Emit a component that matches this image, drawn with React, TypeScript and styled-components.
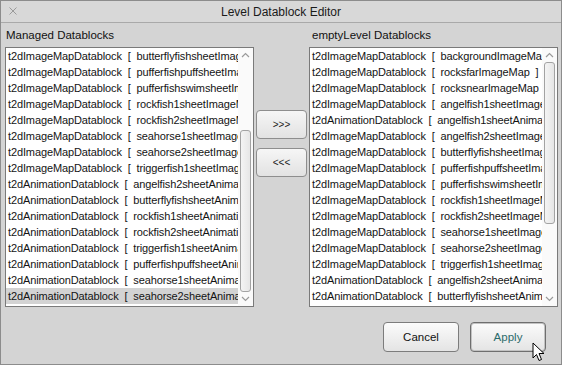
import React from "react";
import styled, { createGlobalStyle } from "styled-components";

const Global = createGlobalStyle`
  html, body { margin: 0; padding: 0; background: #d4d4d4; }
  body { font-family: "Liberation Sans", Arial, sans-serif; }
`;

const Window = styled.div`
  position: relative;
  width: 562px;
  height: 365px;
  box-sizing: border-box;
  border: 1px solid #8c8c8c;
  background: #d4d4d4;
  display: flex;
  flex-direction: column;
  overflow: hidden;
`;

const TitleBar = styled.div`
  position: relative;
  height: 21px;
  flex: none;
  display: flex;
  align-items: center;
  justify-content: center;
  background: #d8d8d8;
  border-bottom: 1px solid #a9a9a9;
  font-size: 12px;
  color: #1a1a1a;
`;

const CloseIcon = styled.svg`
  position: absolute;
  left: 8px;
  top: 6px;
`;

const Body = styled.div`
  display: grid;
  grid-template-columns: 249px 51px 249px;
  column-gap: 2px;
  grid-template-rows: 24px 260px;
  padding: 0 3px 0 4px;
`;

const Label = styled.div<{ $indent: number }>`
  display: flex;
  align-items: center;
  padding-left: ${(p) => p.$indent}px;
  font-size: 11.5px;
  color: #111;
`;

const ListBox = styled.div`
  box-sizing: border-box;
  height: 260px;
  border: 1px solid #7a7a7a;
  background: #ffffff;
  display: flex;
`;

const Rows = styled.div`
  flex: 1;
  min-width: 0;
  display: flex;
  flex-direction: column;
  overflow: hidden;
`;

const Row = styled.div<{ $selected?: boolean }>`
  height: 16px;
  line-height: 16px;
  padding-left: 2px;
  font-size: 11px;
  letter-spacing: -0.12px;
  color: #141414;
  white-space: pre;
  overflow: hidden;
  background: ${(p) => (p.$selected ? "#d3d3d3" : "transparent")};
`;

const ScrollBar = styled.div`
  width: 15px;
  flex: none;
  display: flex;
  flex-direction: column;
  align-items: center;
  background: #fafafa;
`;

const Arrow = styled.div`
  height: 14px;
  flex: none;
  display: flex;
  align-items: center;
  justify-content: center;
`;

const Track = styled.div<{ $atEnd: boolean }>`
  flex: 1;
  width: 100%;
  display: flex;
  flex-direction: column;
  align-items: center;
  justify-content: ${(p) => (p.$atEnd ? "flex-end" : "flex-start")};
`;

const Thumb = styled.div`
  box-sizing: border-box;
  width: 11px;
  height: 162px;
  border: 1px solid #a3a3a3;
  border-radius: 3px;
  background: linear-gradient(to right, #f4f4f4, #e6e6e6);
`;

const Middle = styled.div`
  display: flex;
  flex-direction: column;
  gap: 9px;
  padding-top: 63px;
`;

const MoveButton = styled.button`
  box-sizing: border-box;
  width: 51px;
  height: 29px;
  border: 1px solid #8e8e8e;
  border-radius: 4px;
  background: linear-gradient(#f6f6f6, #e2e2e2);
  font-family: "Liberation Sans", Arial, sans-serif;
  font-size: 10px;
  color: #222;
  padding: 0;
`;

const Footer = styled.div`
  display: flex;
  justify-content: flex-end;
  gap: 11px;
  padding: 15px 15px 0 0;
`;

const DialogButton = styled.button<{ $default?: boolean }>`
  box-sizing: border-box;
  width: 76px;
  height: 30px;
  border: 1px solid ${(p) => (p.$default ? "#6e6e6e" : "#7c7c7c")};
  box-shadow: ${(p) => (p.$default ? "inset 0 0 0 1px #c2c2c2" : "none")};
  border-radius: 4px;
  background: linear-gradient(#fbfbfb, #e4e4e4);
  font-family: "Liberation Sans", Arial, sans-serif;
  font-size: 11.5px;
  color: ${(p) => (p.$default ? "#2b6b6b" : "#111")};
  padding: 0;
`;

const Cursor = styled.svg`
  position: absolute;
  left: 531px;
  top: 341px;
`;

const left = [
  ["t2dImageMapDatablock", "butterflyfishsheetImageMap"],
  ["t2dImageMapDatablock", "pufferfishpuffsheetImageMap"],
  ["t2dImageMapDatablock", "pufferfishswimsheetImageMap"],
  ["t2dImageMapDatablock", "rockfish1sheetImageMap"],
  ["t2dImageMapDatablock", "rockfish2sheetImageMap"],
  ["t2dImageMapDatablock", "seahorse1sheetImageMap"],
  ["t2dImageMapDatablock", "seahorse2sheetImageMap"],
  ["t2dImageMapDatablock", "triggerfish1sheetImageMap"],
  ["t2dAnimationDatablock", "angelfish2sheetAnimation"],
  ["t2dAnimationDatablock", "butterflyfishsheetAnimation"],
  ["t2dAnimationDatablock", "rockfish1sheetAnimation"],
  ["t2dAnimationDatablock", "rockfish2sheetAnimation"],
  ["t2dAnimationDatablock", "triggerfish1sheetAnimation"],
  ["t2dAnimationDatablock", "pufferfishpuffsheetAnimation"],
  ["t2dAnimationDatablock", "seahorse1sheetAnimation"],
  ["t2dAnimationDatablock", "seahorse2sheetAnimation"],
];

const right = [
  ["t2dImageMapDatablock", "backgroundImageMap"],
  ["t2dImageMapDatablock", "rocksfarImageMap"],
  ["t2dImageMapDatablock", "rocksnearImageMap"],
  ["t2dImageMapDatablock", "angelfish1sheetImageMap"],
  ["t2dAnimationDatablock", "angelfish1sheetAnimation"],
  ["t2dImageMapDatablock", "angelfish2sheetImageMap"],
  ["t2dImageMapDatablock", "butterflyfishsheetImageMap"],
  ["t2dImageMapDatablock", "pufferfishpuffsheetImageMap"],
  ["t2dImageMapDatablock", "pufferfishswimsheetImageMap"],
  ["t2dImageMapDatablock", "rockfish1sheetImageMap"],
  ["t2dImageMapDatablock", "rockfish2sheetImageMap"],
  ["t2dImageMapDatablock", "seahorse1sheetImageMap"],
  ["t2dImageMapDatablock", "seahorse2sheetImageMap"],
  ["t2dImageMapDatablock", "triggerfish1sheetImageMap"],
  ["t2dAnimationDatablock", "angelfish2sheetAnimation"],
  ["t2dAnimationDatablock", "butterflyfishsheetAnimation"],
];

const UpArrow = () => (
  <svg width="9" height="6" viewBox="0 0 9 6">
    <path d="M1 5 L4.5 1.5 L8 5" fill="none" stroke="#9a9a9a" strokeWidth="1.2" />
  </svg>
);
const DownArrow = () => (
  <svg width="9" height="6" viewBox="0 0 9 6">
    <path d="M1 1 L4.5 4.5 L8 1" fill="none" stroke="#9a9a9a" strokeWidth="1.2" />
  </svg>
);

function List({ items, selected, atEnd }: { items: string[][]; selected?: number; atEnd: boolean }) {
  return (
    <ListBox>
      <Rows>
        {items.map(([kind, name], i) => (
          <Row key={i} $selected={i === selected}>
            {`${kind}  [  ${name}  ]`}
          </Row>
        ))}
      </Rows>
      <ScrollBar>
        <Arrow>
          <UpArrow />
        </Arrow>
        <Track $atEnd={atEnd}>
          <Thumb />
        </Track>
        <Arrow>
          <DownArrow />
        </Arrow>
      </ScrollBar>
    </ListBox>
  );
}

export default function App() {
  return (
    <>
      <Global />
      <Window>
        <TitleBar>
          <CloseIcon width="8" height="8" viewBox="0 0 8 8">
            <path d="M0.5 0.5 L7.5 7.5 M7.5 0.5 L0.5 7.5" stroke="#9a9a9a" strokeWidth="1" />
          </CloseIcon>
          Level Datablock Editor
        </TitleBar>
        <Body>
          <Label $indent={1}>Managed Datablocks</Label>
          <div />
          <Label $indent={3}>emptyLevel Datablocks</Label>
          <List items={left} selected={15} atEnd={true} />
          <Middle>
            <MoveButton>&gt;&gt;&gt;</MoveButton>
            <MoveButton>&lt;&lt;&lt;</MoveButton>
          </Middle>
          <List items={right} atEnd={false} />
        </Body>
        <Footer>
          <DialogButton>Cancel</DialogButton>
          <DialogButton $default>Apply</DialogButton>
        </Footer>
        <Cursor width="13" height="20" viewBox="0 0 13 20">
          <path
            d="M1 1 L1 16 L4.5 12.5 L7 18.5 L9.5 17.5 L7 11.5 L12 11.5 Z"
            fill="#ffffff"
            stroke="#000000"
            strokeWidth="1"
            strokeLinejoin="round"
          />
        </Cursor>
      </Window>
    </>
  );
}
